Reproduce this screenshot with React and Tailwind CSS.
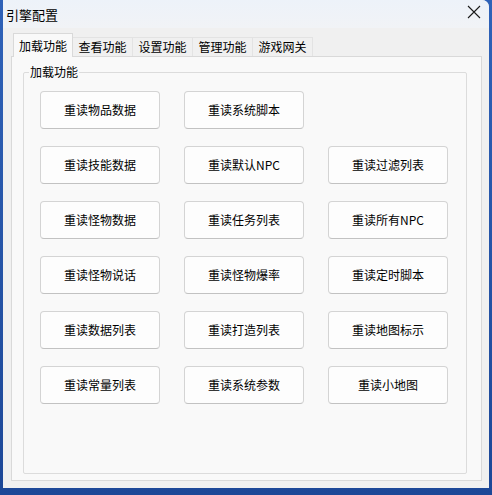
import React from "react";

const tabs = ["加载功能", "查看功能", "设置功能", "管理功能", "游戏网关"];

const rows = [
    ["重读物品数据", "重读系统脚本", null],
    ["重读技能数据", "重读默认NPC", "重读过滤列表"],
    ["重读怪物数据", "重读任务列表", "重读所有NPC"],
    ["重读怪物说话", "重读怪物爆率", "重读定时脚本"],
    ["重读数据列表", "重读打造列表", "重读地图标示"],
    ["重读常量列表", "重读系统参数", "重读小地图"],
];

const font = { fontFamily: '"Microsoft YaHei", "Noto Sans CJK SC", sans-serif' };

const App = () => {
    return (
        <div className="flex h-[495px] w-[492px] bg-gradient-to-b from-[#2f62b8] to-[#1c4797] text-[#000]" style={font}>
            <div className="ml-[3px] flex h-[488px] w-[486px] flex-col rounded-tr-[7px] bg-[#f0f0f0]">
                {/* title bar */}
                <div className="flex h-[28px] items-center justify-between rounded-tr-[7px] bg-gradient-to-b from-[#edf2f9] to-[#f1f3f6] pl-[3px] pr-[8px]">
                    <span className="text-[13px] leading-none">引擎配置</span>
                    <svg width="14" height="14" viewBox="0 0 14 14" className="mb-[5px]">
                        <path d="M1 1 L13 13 M13 1 L1 13" stroke="#1a1a1a" strokeWidth="1.1" />
                    </svg>
                </div>

                {/* tabs */}
                <div className="mt-[5px] flex items-end pl-[10px]">
                    {tabs.map((tab, i) =>
                        i === 0 ? (
                            <div
                                key={tab}
                                className="relative z-10 -mb-px flex h-[24px] w-[60px] items-center justify-center border border-b-0 border-[#d9d9d9] bg-[#f9f9f9] text-[12px]"
                            >
                                {tab}
                            </div>
                        ) : (
                            <div
                                key={tab}
                                className="flex h-[19px] w-[60px] items-center justify-center border-r border-t border-[#e3e3e3] bg-[#f0f0f0] text-[12px]"
                            >
                                {tab}
                            </div>
                        )
                    )}
                </div>

                {/* tab panel */}
                <div className="ml-[8px] h-[425px] w-[471px] border border-[#d9d9d9] bg-[#f9f9f9] pl-[11px] pr-[14px] pt-[7px]">
                    <fieldset className="h-[410px] rounded-[2px] border border-[#dcdcdc]">
                        <legend className="ml-[5px] px-[1px] text-[12px] leading-[16px]">加载功能</legend>
                        <div className="grid grid-cols-[120px_120px_120px] gap-x-[24px] gap-y-[17px] pl-[16px] pt-[11px]">
                            {rows.flat().map((label, i) =>
                                label ? (
                                    <div
                                        key={i}
                                        className="flex h-[38px] items-center justify-center rounded-[4px] border border-[#d4d4d4] border-b-[#c2c2c2] bg-[#fdfdfd] text-[12px]"
                                    >
                                        {label}
                                    </div>
                                ) : (
                                    <div key={i} />
                                )
                            )}
                        </div>
                    </fieldset>
                </div>
            </div>
        </div>
    );
};

export default App;
